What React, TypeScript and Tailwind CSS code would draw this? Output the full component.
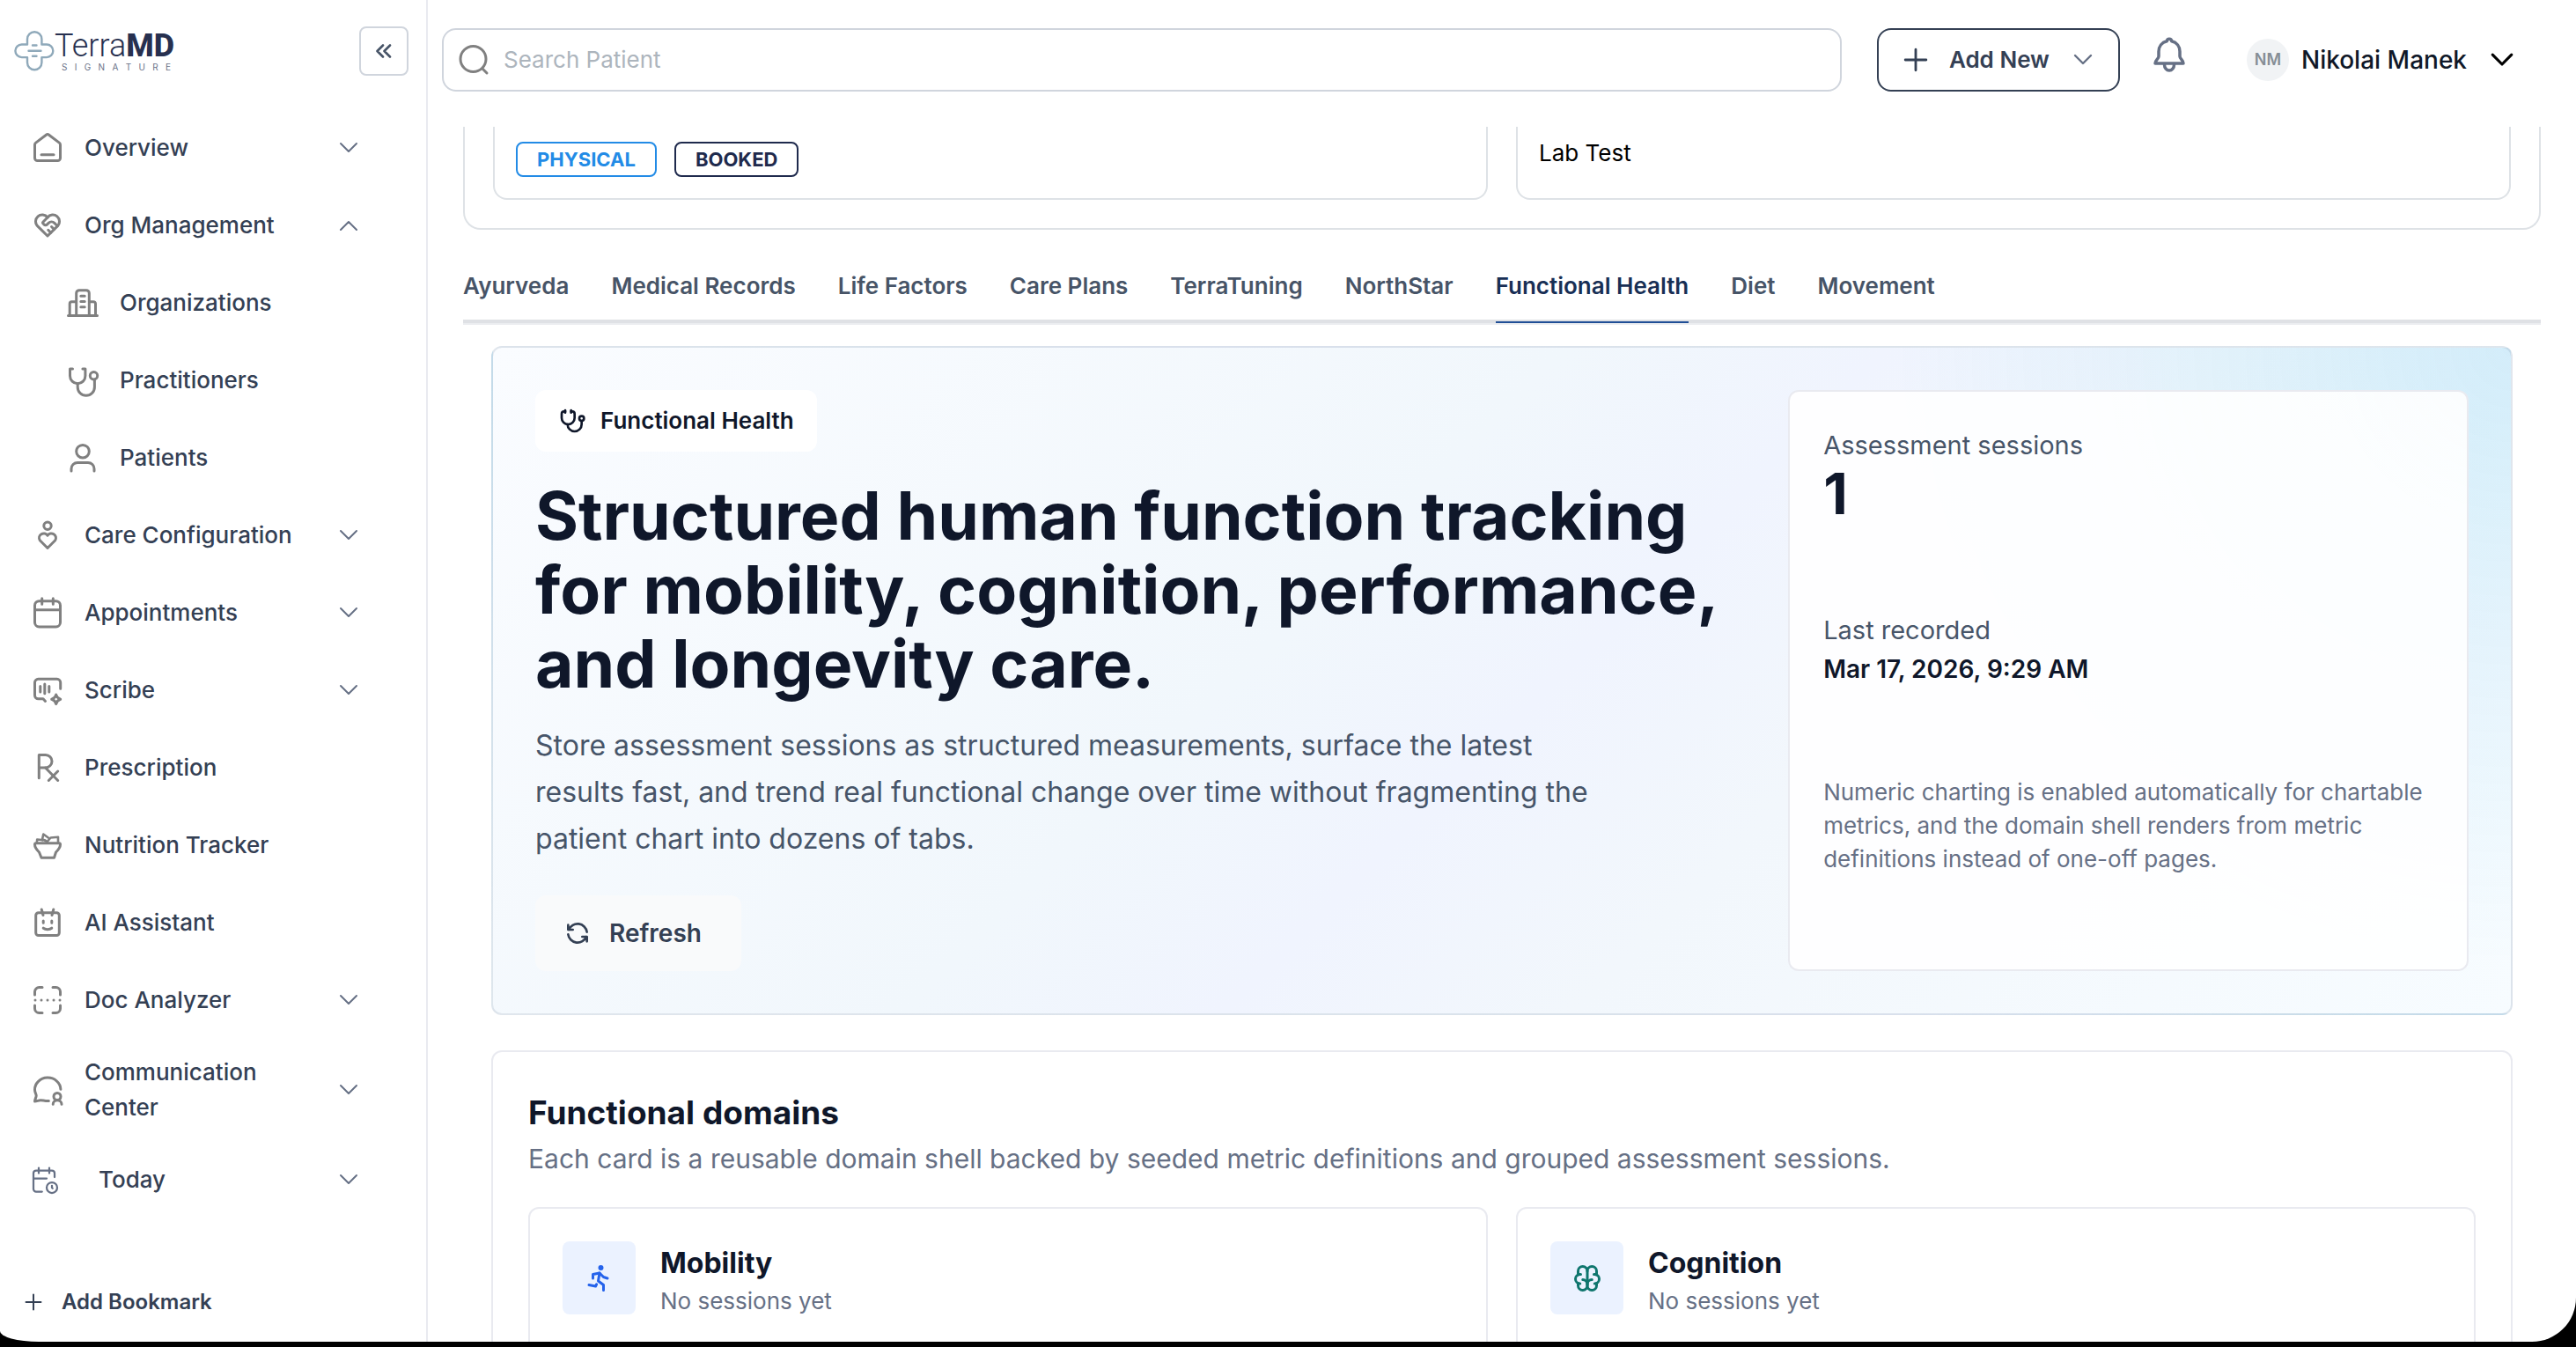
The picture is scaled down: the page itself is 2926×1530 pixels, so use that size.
import React from "react";
import { TbBrain, TbRefresh, TbRun, TbStethoscope } from "react-icons/tb";

type IconProps = { children: React.ReactNode; className?: string; width?: number };

function NavIcon({ children, className = "text-[#808080]", width = 3 }: IconProps) {
  return (
    <svg
      viewBox="0 0 36 36"
      className={`size-9 shrink-0 overflow-visible ${className}`}
      fill="none"
      stroke="currentColor"
      strokeWidth={width}
      strokeLinecap="round"
      strokeLinejoin="round"
      aria-hidden="true"
    >
      {children}
    </svg>
  );
}

function Chevron({ up = false, className = "w-5 text-[#667085]", width = 2 }: { up?: boolean; className?: string; width?: number }) {
  return (
    <svg
      viewBox="0 0 20 12"
      className={`shrink-0 overflow-visible ${className}`}
      fill="none"
      stroke="currentColor"
      strokeWidth={width}
      strokeLinecap="round"
      strokeLinejoin="round"
      aria-hidden="true"
    >
      <path d={up ? "M1 11 10 2l9 9" : "M1 1l9 9 9-9"} />
    </svg>
  );
}

function Plus({ className, width }: { className: string; width: number }) {
  return (
    <svg viewBox="0 0 26 26" className={`shrink-0 ${className}`} fill="none" stroke="currentColor" strokeWidth={width} strokeLinecap="round" aria-hidden="true">
      <path d="M13 2v22M2 13h22" />
    </svg>
  );
}

const icons = {
  home: (
    <NavIcon>
      <path d="M3.5 14.5a3 3 0 0 1 1.2-2.4L16.4 3.200a2.600 2.600 0 0 1 3.200 0l11.700 8.900a3 3 0 0 1 1.200 2.400V29.500a3 3 0 0 1-3 3h-23a3 3 0 0 1-3-3z" />
      <path d="M11 25.700h14" />
    </NavIcon>
  ),
  heart: (
    <NavIcon>
      <g transform="scale(1.5)" strokeWidth="2">
        <path d="M19.500 12.572 12 20l-7.500-7.428A5 5 0 1 1 12 6.006a5 5 0 1 1 7.500 6.572" />
        <path d="M12 6 8.707 9.293a1 1 0 0 0 0 1.414l.543.543c.69.69 1.810.69 2.500 0l1-1a3.182 3.182 0 0 1 4.500 0l2.250 2.250" />
        <path d="m12.500 15.500 2 2M15 13l2 2" />
      </g>
    </NavIcon>
  ),
  building: (
    <NavIcon>
      <path d="M1.500 32.500h33M3.200 32.500V19a2.300 2.300 0 0 1 2.300-2.300h5M32.500 32.500V19a2.300 2.300 0 0 0-2.300-2.300h-5M10.700 32.500V7a3.300 3.300 0 0 1 3.300-3.300h8A3.300 3.300 0 0 1 25.300 7v25.500" />
      <path d="M15.800 10.200h4.400M15.800 16.500h4.400M15.800 22.800h4.400" />
    </NavIcon>
  ),
  stethoscope: (
    <NavIcon>
      <path d="M6.500 5H3.500v8a8.700 8.700 0 0 0 17.400 0V5h-3" />
      <path d="M12.200 21.700v4a9.600 9.600 0 0 0 19.200 0V17" />
      <circle cx="30.500" cy="12.700" r="4.200" />
    </NavIcon>
  ),
  person: (
    <NavIcon>
      <circle cx="18" cy="10.700" r="7.300" />
      <path d="M5 33v-2.500a7 7 0 0 1 7-7h12a7 7 0 0 1 7 7V33" />
    </NavIcon>
  ),
  care: (
    <NavIcon>
      <circle cx="18" cy="7.300" r="4.200" />
      <path d="M18 32.500 9.300 23.800A5 5 0 0 1 18 18.300a5 5 0 0 1 8.700 5.500z" />
    </NavIcon>
  ),
  calendar: (
    <NavIcon>
      <rect x="3.500" y="4.700" width="29" height="29.300" rx="5" />
      <path d="M3.500 14.700h29M11.700 1.700v6.600M24.300 1.700v6.600" />
    </NavIcon>
  ),
  scribe: (
    <NavIcon>
      <path d="M32.700 16.300V9.300a4 4 0 0 0-4-4H7.500a4 4 0 0 0-4 4v14.500a4 4 0 0 0 4 4H13l2.500 2.700" />
      <path d="M9.800 13.500v6.500M14.800 11v10.700M19.800 13.500v6.500" />
      <path d="M27.700 23c.8 3.200 1.900 4.400 5 5.300-3.100.9-4.200 2.100-5 5.300-.8-3.200-1.900-4.400-5-5.300 3.100-.9 4.200-2.100 5-5.300z" />
    </NavIcon>
  ),
  rx: (
    <NavIcon>
      <path d="M8.300 29.700V3.500h7.500a7.200 7.200 0 0 1 0 14.400H8.300" />
      <path d="M15.500 18l14.200 14.500M29.700 22 19.300 32.500" />
    </NavIcon>
  ),
  bowl: (
    <NavIcon>
      <path d="M3.500 17.200c0-.9.600-1.500 1.500-1.500h26c.9 0 1.500.6 1.500 1.500 0 3-2.500 6.300-5 8.800l-2 6.300H11l-2.500-6.300c-2.500-2.500-5-5.800-5-8.800z" />
      <path d="M5.800 15.500l.4-4 5 .5M12 11.500l1.300-6 5.500 4M12 12.500c2-.9 4.300 0 6 3M18.500 13l3-3.500 8.500-.8v6.800" strokeWidth="2.600" />
    </NavIcon>
  ),
  bot: (
    <NavIcon>
      <rect x="4.700" y="6.700" width="26.600" height="25.800" rx="3" />
      <path d="M11.200 3 13 9.500M24.800 3 23 9.500M13.200 16v2.200M22.800 16v2.200M13.200 24.200c2.500 1.900 7.100 1.900 9.600 0" />
    </NavIcon>
  ),
  scan: (
    <NavIcon>
      <path d="M3.500 12V8.500a5 5 0 0 1 5-5H12M24 3.500h3.500a5 5 0 0 1 5 5V12M3.500 24v3.500a5 5 0 0 0 5 5H12M24 32.500h3.500a5 5 0 0 0 5-5V24" />
      <path d="M4 18h.01M11 18h.01M18 18h.01M25 18h.01M32 18h.01" />
    </NavIcon>
  ),
  chat: (
    <NavIcon>
      <path d="M32.900 17.200A14.500 13.300 0 0 0 3.500 18c0 3.200 1.700 4.600 1.700 6.500 0 2-1.700 4.300-1.700 6.500 2.500 0 4-1.300 6.500-1.300 2.700 0 5 1.100 9.300.9" />
      <circle cx="29" cy="25.500" r="4" />
      <path d="M24.200 34.300c0-2.700 2.100-4.500 4.900-4.500s4.900 1.800 4.900 4.500" />
    </NavIcon>
  ),
  today: (
    <NavIcon className="text-[#667085]" width={2}>
      <g transform="scale(1.5)" strokeWidth="1.500">
        <path d="M10.500 21H6a2 2 0 0 1-2-2V7a2 2 0 0 1 2-2h12a2 2 0 0 1 2 2v3M16 3v4M8 3v4M4 11h10" />
        <circle cx="18" cy="18" r="4" />
        <path d="M18 16.500V18l.5.500" />
      </g>
    </NavIcon>
  ),
};

type NavItem = { label: string; icon: keyof typeof icons; caret?: "up" | "down"; layout?: "sub" | "today" };

const nav: NavItem[] = [
  { label: "Overview", icon: "home", caret: "down" },
  { label: "Org Management", icon: "heart", caret: "up" },
  { label: "Organizations", icon: "building", layout: "sub" },
  { label: "Practitioners", icon: "stethoscope", layout: "sub" },
  { label: "Patients", icon: "person", layout: "sub" },
  { label: "Care Configuration", icon: "care", caret: "down" },
  { label: "Appointments", icon: "calendar", caret: "down" },
  { label: "Scribe", icon: "scribe", caret: "down" },
  { label: "Prescription", icon: "rx" },
  { label: "Nutrition Tracker", icon: "bowl" },
  { label: "AI Assistant", icon: "bot" },
  { label: "Doc Analyzer", icon: "scan", caret: "down" },
  { label: "Communication Center", icon: "chat", caret: "down" },
  { label: "Today", icon: "today", caret: "down", layout: "today" },
];

function rowLayout(layout?: NavItem["layout"]) {
  if (layout === "sub") return "pl-[76px] gap-6";
  if (layout === "today") return "pl-8 gap-11";
  return "pl-9 gap-6";
}

function Logo() {
  return (
    <a href="#home" aria-label="TerraMD Signature" className="flex items-center text-[#27304f]">
      <svg viewBox="0 0 46 46" className="size-[46px] shrink-0 text-[#8fa9ba]" fill="none" stroke="currentColor" strokeWidth="2.400" strokeLinecap="round" aria-hidden="true">
        <path d="M15 15.500V9.500a8.200 8.200 0 0 1 16.400 0v6h5.600a7.300 7.300 0 0 1 0 14.600h-5.600v6a8.200 8.200 0 0 1-16.400 0v-6H8.700a7.300 7.300 0 0 1 0-14.600z" strokeLinejoin="round" />
        <path d="M21 16.500h4.500M16.500 22.700h14M21 28.800h4.500" />
      </svg>
      <span className="flex flex-col">
        <span className="font-[Roboto,sans-serif] text-4xl leading-9">
          <span className="font-light">Terra</span>
          <span className="font-extrabold">MD</span>
        </span>
        <span className="flex justify-between pl-2 pr-1 text-[10px] leading-3 text-[#6b7288]">
          {"SIGNATURE".split("").map((letter, i) => (
            <span key={i}>{letter}</span>
          ))}
        </span>
      </span>
    </a>
  );
}

function Sidebar() {
  return (
    <aside className="flex w-[486px] shrink-0 flex-col border-r-2 border-[#e9eaf0]">
      <div className="flex items-center justify-between pt-[30px] pr-5 pb-[38px] pl-4">
        <Logo />
        <button type="button" aria-label="Collapse sidebar" className="grid size-14 place-items-center rounded-lg border-2 border-[#d0d5dd]">
          <svg viewBox="0 0 18 16" className="w-[18px] text-[#475467]" fill="none" stroke="currentColor" strokeWidth="2.600" strokeLinecap="round" strokeLinejoin="round" aria-hidden="true">
            <path d="M8 1.500 1.500 8 8 14.500M16 1.500 9.500 8l6.500 6.500" />
          </svg>
        </button>
      </div>
      <nav aria-label="Main">
        <ul>
          {nav.map((item) => (
            <li key={item.label}>
              <button
                type="button"
                className={`flex min-h-[88px] w-full items-center py-[18px] pr-[78px] text-left text-[26px] leading-10 font-medium text-[#344054] ${rowLayout(item.layout)}`}
              >
                {icons[item.icon]}
                <span className="min-w-0 flex-1">
                  <span className="block max-w-[240px]">{item.label}</span>
                </span>
                {item.caret && <Chevron up={item.caret === "up"} />}
              </button>
            </li>
          ))}
        </ul>
      </nav>
      <button type="button" className="mt-auto mb-[25px] flex items-center gap-[22px] pl-7 text-2xl leading-10 font-semibold text-[#344054]">
        <Plus className="size-5" width={2.6} />
        Add Bookmark
      </button>
    </aside>
  );
}

function Header() {
  return (
    <header className="flex h-36 shrink-0 items-start pt-8 pr-[72px] pl-4">
      <label className="flex h-[72px] flex-1 items-center gap-4 rounded-2xl border-2 border-[#d0d5dd] px-4">
        <svg viewBox="0 0 36 36" className="size-9 shrink-0 text-[#808080]" fill="none" stroke="currentColor" strokeWidth="3" strokeLinecap="round" aria-hidden="true">
          <circle cx="17.500" cy="17" r="14.500" />
          <path d="m28 28 5 5" />
        </svg>
        <input type="search" aria-label="Search Patient" placeholder="Search Patient" className="min-w-0 flex-1 text-[26px] leading-10 outline-none placeholder:text-[#adb5bd]" />
      </label>
      <button type="button" className="ml-10 flex h-[72px] items-center gap-6 rounded-2xl border-2 border-[#344054] pr-[30px] pl-7 text-[26px] leading-10 font-semibold text-[#344054]">
        <Plus className="size-[28px]" width={2.6} />
        Add New
        <Chevron className="ml-1 w-5 text-[#667085]" width={2.4} />
      </button>
      <div className="flex h-[72px] items-center">
        <button type="button" aria-label="Notifications" className="ml-9 pb-3">
          <svg viewBox="0 0 40 40" className="size-10 text-[#667085]" fill="none" stroke="currentColor" strokeWidth="3.500" strokeLinecap="round" strokeLinejoin="round" aria-hidden="true">
            <path d="M20 2.200c-1.700 0-2.500 1-2.700 2.600C11.500 6.200 8 10.700 8 16.500V22c0 2.800-4 4.200-4 8h32c0-3.800-4-5.200-4-8v-5.500c0-5.800-3.500-10.300-9.300-11.700-.2-1.600-1-2.600-2.700-2.600z" />
            <path d="M14.500 31.500a5.500 6.500 0 0 0 11 0" />
          </svg>
        </button>
        <button type="button" className="ml-[68px] flex items-center text-[28px] leading-10 font-medium text-[#101828]">
          <span className="grid size-12 place-items-center rounded-full bg-[#f1f3f5] text-lg font-semibold text-[#868e96]">NM</span>
          <span className="ml-[14px]">Nikolai Manek</span>
          <Chevron className="ml-7 w-6 text-black" width={2.6} />
        </button>
      </div>
    </header>
  );
}

const tabs = ["Ayurveda", "Medical Records", "Life Factors", "Care Plans", "TerraTuning", "NorthStar", "Functional Health", "Diet", "Movement"];

function Hero() {
  return (
    <section className="grid min-h-[760px] grid-cols-[1.8fr_1fr] gap-8 rounded-xl border-2 border-[#94a3b8]/25 bg-[radial-gradient(circle_at_top_right,rgba(14,165,233,0.14),transparent_29%),linear-gradient(135deg,#fafcff_0%,#f1f7fc_40%,#f0f4fe_52%,#f2f7fc_65%,#f7fcff_100%)] p-12">
      <div className="flex flex-col items-start">
        <div className="flex h-[70px] items-center gap-4 rounded-xl bg-white px-[26px] text-[26px] leading-10 font-semibold text-[#0f172a]">
          <TbStethoscope className="size-8" />
          Functional Health
        </div>
        <h1 className="mt-[31px] text-[75px] leading-[84px] font-bold text-[#0f172a]">
          Structured human function tracking for mobility, cognition, performance, and longevity care.
        </h1>
        <p className="mt-6 max-w-[1220px] text-[32px] leading-[53px] text-[#475569]">
          Store assessment sessions as structured measurements, surface the latest results fast, and trend real functional change over time without fragmenting the patient chart into dozens of tabs.
        </p>
        <button type="button" className="mt-[38px] flex h-[86px] items-center gap-5 rounded-xl bg-[#f9fafb] pr-[45px] pl-8 text-[28px] leading-10 font-semibold text-[#344054]">
          <TbRefresh className="size-8" />
          Refresh
        </button>
      </div>
      <div className="flex flex-col gap-[100px] rounded-xl border-2 border-[#e9eaf0] bg-white/90 p-[38px]">
        <div>
          <p className="text-[29px] leading-[46px] text-[#475569]">Assessment sessions</p>
          <p className="text-[64px] leading-[64px] font-bold text-[#0f172a]">1</p>
        </div>
        <div>
          <p className="text-[29px] leading-[46px] text-[#475569]">Last recorded</p>
          <p className="text-[28px] leading-[42px] font-semibold text-[#0f172a]">Mar 17, 2026, 9:29 AM</p>
        </div>
        <p className="text-[26px] leading-[38px] text-[#667085]">
          Numeric charting is enabled automatically for chartable metrics, and the domain shell renders from metric definitions instead of one-off pages.
        </p>
      </div>
    </section>
  );
}

const domains = [
  { name: "Mobility", icon: <TbRun className="size-9 text-[#2563eb]" /> },
  { name: "Cognition", icon: <TbBrain className="size-9 text-[#0f766e]" /> },
];

function Domains() {
  return (
    <section className="mt-10 rounded-xl border-2 border-[#e9eaf0] p-10">
      <h2 className="text-[37px] leading-[58px] font-bold text-[#0f172a]">Functional domains</h2>
      <p className="text-[30px] leading-[46px] text-[#667085]">
        Each card is a reusable domain shell backed by seeded metric definitions and grouped assessment sessions.
      </p>
      <div className="mt-8 grid grid-cols-2 gap-8">
        {domains.map((domain) => (
          <article key={domain.name} className="flex gap-7 rounded-xl border-2 border-[#e9eaf0] p-[37px] pb-32">
            <div className="grid size-[83px] shrink-0 place-items-center rounded-lg bg-[#ebf2ff]">{domain.icon}</div>
            <div>
              <h3 className="text-[32px] leading-[50px] font-bold text-[#0f172a]">{domain.name}</h3>
              <p className="text-[26px] leading-9 text-[#667085]">No sessions yet</p>
            </div>
          </article>
        ))}
      </div>
    </section>
  );
}

export default function App() {
  return (
    <div className="h-screen overflow-hidden bg-black pb-[6px] font-[Inter,sans-serif]">
      <div className="flex h-full overflow-hidden rounded-br-[50px] bg-white [border-bottom-left-radius:44px_12px]">
        <Sidebar />
        <div className="flex min-w-0 flex-1 flex-col">
          <Header />
          <main className="min-h-0 flex-1 overflow-hidden px-10">
            <div className="grid grid-cols-2 gap-8 rounded-b-[20px] border-2 border-t-0 border-[#dee2e6] px-8 pb-8">
              <div className="flex items-start gap-5 rounded-b-2xl border-2 border-t-0 border-[#dee2e6] px-6 pt-[17px] pb-6 text-[22px] leading-9 font-bold">
                <span className="rounded-lg border-2 border-[#228be6] px-[22px] text-[#228be6]">PHYSICAL</span>
                <span className="rounded-lg border-2 border-[#1f2a4d] px-[22px] text-[#1f2a4d]">BOOKED</span>
              </div>
              <div className="rounded-b-2xl border-2 border-t-0 border-[#dee2e6] px-6 pt-[10px] text-[26px] leading-10 text-black">Lab Test</div>
            </div>
            <div className="border-b-2 border-[#eceef1] pt-12">
              <div role="tablist" className="flex gap-12 border-b-4 border-[#dfe1e5]">
                {tabs.map((tab) => {
                  const active = tab === "Functional Health";
                  return (
                    <button
                      key={tab}
                      type="button"
                      role="tab"
                      aria-selected={active}
                      className={`-mb-1 border-b-2 pb-6 text-[26px] leading-8 font-semibold ${active ? "border-[#1f4e96] text-[#182f55]" : "border-transparent text-[#475467]"}`}
                    >
                      {tab}
                    </button>
                  );
                })}
              </div>
            </div>
            <div className="px-8 pt-6">
              <Hero />
              <Domains />
            </div>
          </main>
        </div>
      </div>
    </div>
  );
}
